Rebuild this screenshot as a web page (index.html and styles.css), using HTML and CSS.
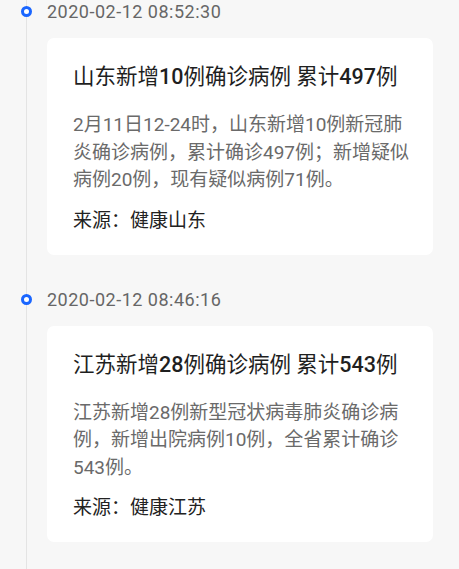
FILE: index.html
```html
<!DOCTYPE html>
<html lang="zh-CN">
<head>
    <meta charset="UTF-8">
    <meta name="viewport" content="width=device-width, initial-scale=1.0">
    <title>疫情动态</title>
    <link rel="stylesheet" href="styles.css">
</head>
<body>
    <div class="timeline">
        <div class="item">
            <div class="time">2020-02-12 08:52:30</div>
            <div class="card">
                <h2 class="title">山东新增<b>10</b>例确诊病例 累计<b>497</b>例</h2>
                <p class="summary">2月11日12-24时，山东新增10例新冠肺炎确诊病例，累计确诊497例；新增疑似病例20例，现有疑似病例71例。</p>
                <p class="source">来源：健康山东</p>
            </div>
        </div>

        <div class="item">
            <div class="time">2020-02-12 08:46:16</div>
            <div class="card">
                <h2 class="title">江苏新增<b>28</b>例确诊病例 累计<b>543</b>例</h2>
                <p class="summary">江苏新增28例新型冠状病毒肺炎确诊病例，新增出院病例10例，全省累计确诊543例。</p>
                <p class="source">来源：健康江苏</p>
            </div>
        </div>
    </div>
</body>
</html>
```

FILE: styles.css
```css
body {
    margin: 0;
    padding: 0;
    background-color: #f7f7f7;
    font-family: Roboto, "Noto Sans CJK SC", sans-serif;
}

.timeline {
    box-sizing: border-box;
    min-height: 100vh;
    margin-left: 26px;
    padding: 0 26px 1px 20px;
    border-left: 1px solid #e4e4e4;
}

.item {
    margin-bottom: 33px;
}

.time {
    position: relative;
    font-size: 18px;
    line-height: 24px;
    letter-spacing: 0.5px;
    color: #666;
}

/* blue dot sitting on the line */
.time::before {
    content: "";
    position: absolute;
    left: -26px;
    top: 6px;
    width: 11px;
    height: 11px;
    box-sizing: border-box;
    border: 3px solid #1a66ff;
    border-radius: 50%;
    background-color: #fff;
}

.card {
    margin-top: 14px;
    padding: 24px 22px 21px 26px;
    background-color: #fff;
    border-radius: 7px;
}

.title {
    margin: 0 0 19px;
    font-size: 21.5px;
    line-height: 30px;
    font-weight: normal;
    color: #1f1f1f;
}

.title b {
    font-weight: 500;
}

.summary {
    margin: 0;
    font-size: 19px;
    line-height: 27.5px;
    color: #6a6a6a;
}

.source {
    margin: 13px 0 0;
    font-size: 19px;
    line-height: 27px;
    color: #222;
}
```
